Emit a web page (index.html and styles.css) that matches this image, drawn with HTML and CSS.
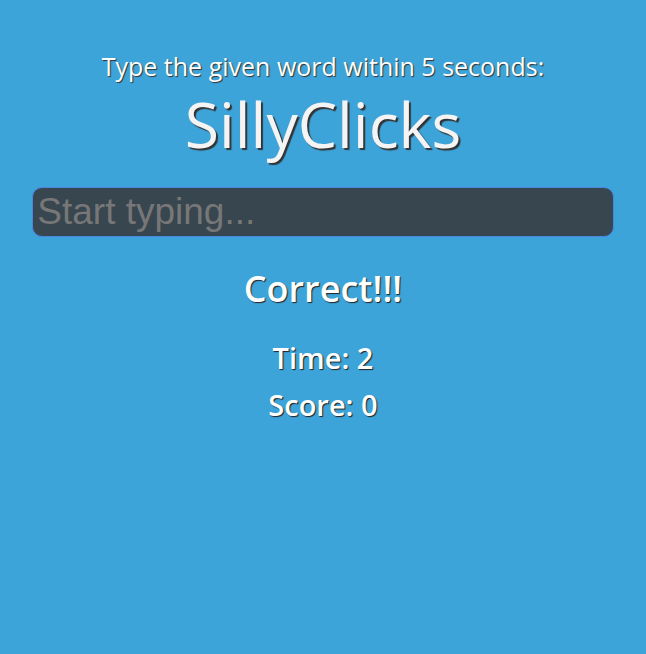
FILE: index.html
```html
<!DOCTYPE html>
<html>
<head>
<meta charset="utf-8">
<link rel="stylesheet" href="styles.css">
</head>
<body>
<main class="game">
  <p class="lead">Type the given word within 5 seconds:</p>
  <h1 class="word">SillyClicks</h1>
  <input class="entry" type="text" placeholder="Start typing...">
  <h2 class="message">Correct!!!</h2>
  <h3 class="stat">Time: 2</h3>
  <h3 class="stat">Score: 0</h3>
</main>
</body>
</html>
```

FILE: styles.css
```css
html, body {
  margin: 0;
  padding: 0;
  background: #3da4da;
  height: 100%;
}
body {
  font-family: "Open Sans", sans-serif;
  color: #fff;
}
.game {
  display: flex;
  flex-direction: column;
  align-items: center;
  padding-top: 48px;
}
.lead {
  margin: 0;
  font-size: 25px;
  line-height: 36px;
  text-shadow: 1px 1px 1px #333;
}
.word {
  margin: 0;
  font-size: 62.5px;
  font-weight: 400;
  line-height: 80px;
  color: #f4f4f4;
  text-shadow: 2px 2px 1px #333;
}
.entry {
  margin-top: 23px;
  width: 90%;
  box-sizing: border-box;
  height: 50px;
  background: #384650;
  border: 1px solid #4a86e0;
  border-radius: 10px;
  padding: 0 4px;
  font-family: "Liberation Sans", Arial, sans-serif;
  font-size: 37px;
  color: #ddd;
  outline: none;
}
.entry::placeholder {
  color: #777;
}
.message {
  margin: 27px 0 0;
  font-size: 36px;
  font-weight: 600;
  line-height: 50px;
  text-shadow: 1px 1px 1px #222;
}
.stat {
  margin: 0;
  font-size: 29px;
  font-weight: 600;
  line-height: 47px;
  text-shadow: 1px 1px 1px #222;
}
.message + .stat {
  margin-top: 20px;
}
```
